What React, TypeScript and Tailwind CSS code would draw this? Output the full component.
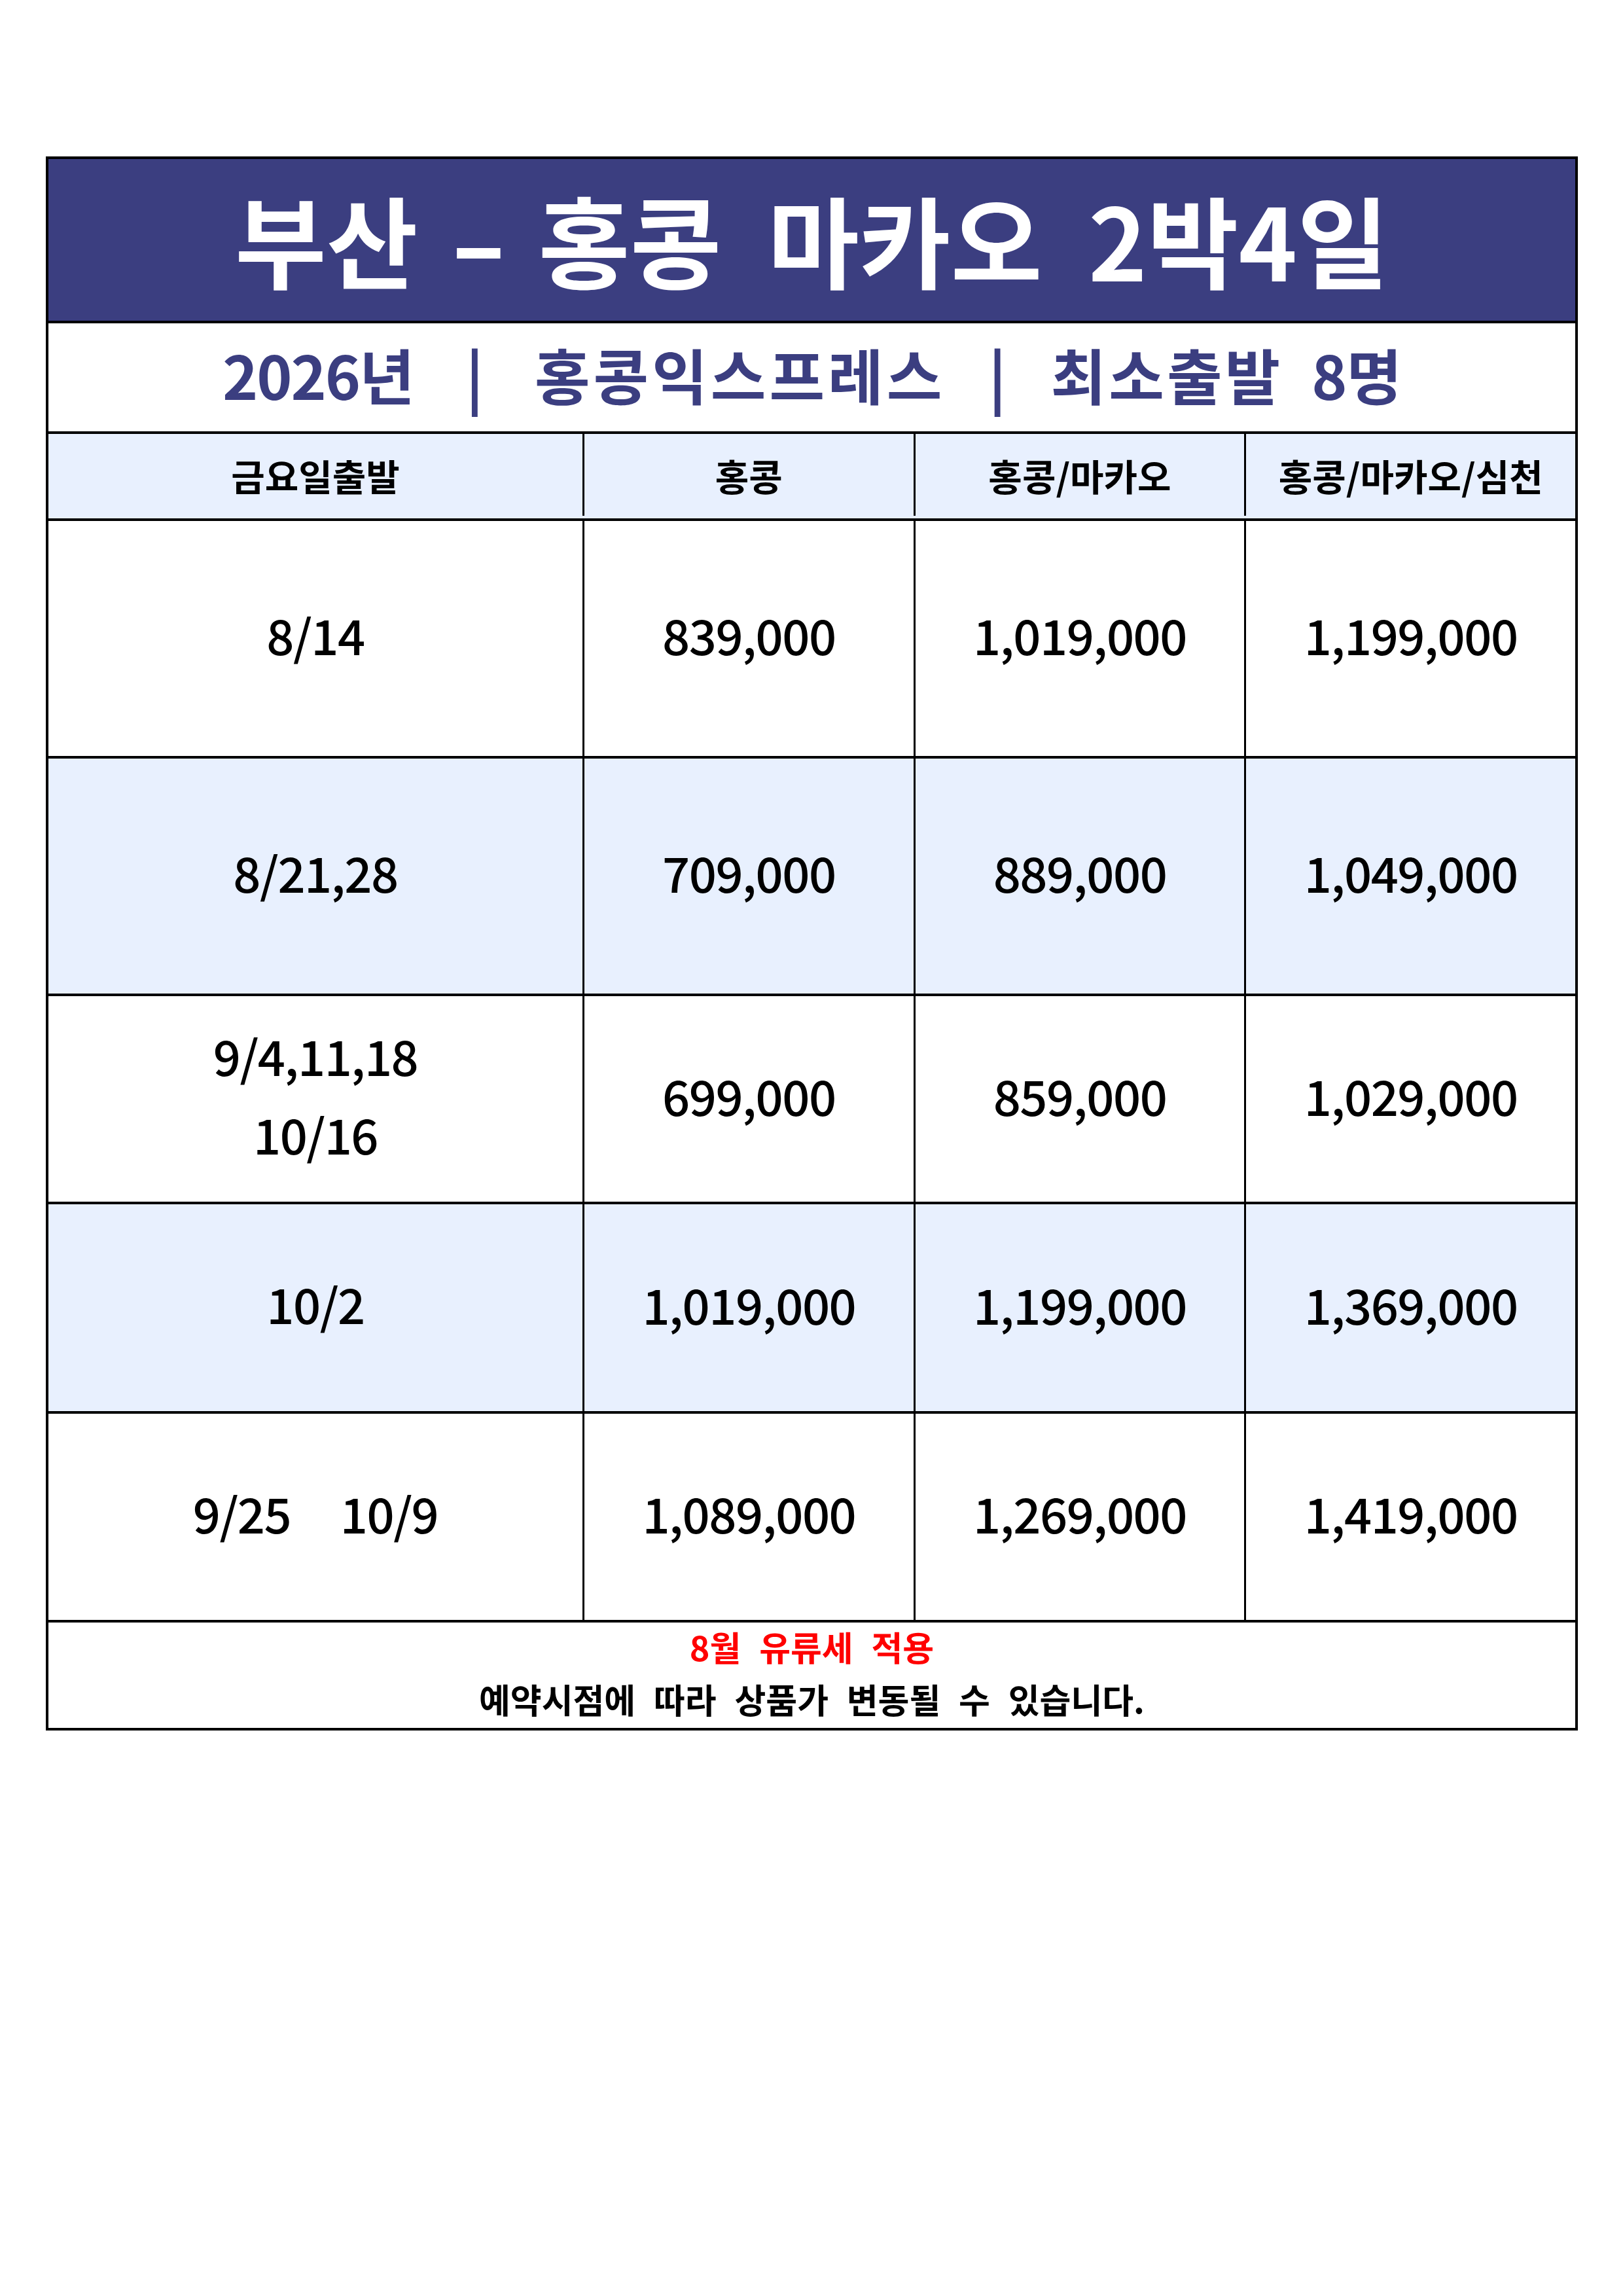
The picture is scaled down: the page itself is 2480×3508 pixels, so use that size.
const rows = [
  { date: ["8/14"], prices: ["839,000", "1,019,000", "1,199,000"], h: "h-[363px]", blue: false },
  { date: ["8/21,28"], prices: ["709,000", "889,000", "1,049,000"], h: "h-[363px]", blue: true },
  { date: ["9/4,11,18", "10/16"], prices: ["699,000", "859,000", "1,029,000"], h: "h-[318px]", blue: false },
  { date: ["10/2"], prices: ["1,019,000", "1,199,000", "1,369,000"], h: "h-[320px]", blue: true },
  { date: ["9/25     10/9"], prices: ["1,089,000", "1,269,000", "1,419,000"], h: "h-[319px]", blue: false },
];

const headers = ["홍콩", "홍콩/마카오", "홍콩/마카오/심천"];

export default function App() {
  return (
    <div
      className="w-[2480px] h-[3508px] bg-white pt-[239px]"
      style={{ fontFamily: '"Noto Sans CJK KR", "Noto Sans", sans-serif' }}
    >
      <div className="ml-[70px] w-[2341px] border-4 border-black">
        {/* title */}
        <div className="h-[247px] bg-[#3b3e80] flex items-center justify-center pb-[6px]">
          <h1 className="text-white text-[152px] font-bold leading-none whitespace-pre [word-spacing:36px] flex items-center">
            <span>부산</span>
            <span className="inline-block scale-x-[1.6] mx-[64px]">-</span>
            <span>홍콩 마카오 2박4일</span>
          </h1>
        </div>

        {/* subtitle */}
        <div className="h-[169px] border-t-4 border-black flex items-center justify-center pb-[12px]">
          <p className="text-[#3b3e80] text-[92px] font-bold leading-none flex items-center">
            <span className="tracking-[-2px]">2026년</span>
            <span className="ml-[80px] mr-[78px]">|</span>
            <span className="tracking-[5px]">홍콩익스프레스</span>
            <span className="ml-[66px] mr-[68px]">|</span>
            <span className="tracking-[4px]">최소출발</span>
            <span className="ml-[44px] tracking-[-1px]">8명</span>
          </p>
        </div>

        {/* column header */}
        <div className="h-[133px] border-t-4 border-black bg-[#e8f0fe] flex text-[56px] font-bold text-black pb-[4px]">
          <div className="w-[816px] flex items-center justify-center">금요일출발</div>
          {headers.map((t) => (
            <div key={t} className="flex-1 border-l-[3px] border-black flex items-center justify-center">
              {t}
            </div>
          ))}
        </div>

        {/* price rows */}
        {rows.map((r, i) => (
          <div
            key={i}
            className={`${r.h} border-t-4 border-black flex text-[74px] font-medium text-black tracking-[-1.5px] ${
              r.blue ? "bg-[#e8f0fe]" : "bg-white"
            }`}
          >
            <div className="w-[816px] flex flex-col items-center justify-center leading-[120px] pb-[14px]">
              {r.date.map((d) => (
                <span key={d} className="whitespace-pre">
                  {d}
                </span>
              ))}
            </div>
            {r.prices.map((p, j) => (
              <div key={j} className="flex-1 border-l-[3px] border-black flex items-center justify-center pb-[14px]">
                {p}
              </div>
            ))}
          </div>
        ))}

        {/* footer */}
        <div className="h-[165px] border-t-4 border-black flex flex-col items-center justify-center gap-[28px] font-bold leading-none pb-[8px]">
          <p className="text-[#ff0000] text-[52px] whitespace-pre [word-spacing:16px]">8월 유류세 적용</p>
          <p className="text-black text-[52px] whitespace-pre [word-spacing:16px]">
            예약시점에 따라 상품가 변동될 수 있습니다.
          </p>
        </div>
      </div>
    </div>
  );
}
